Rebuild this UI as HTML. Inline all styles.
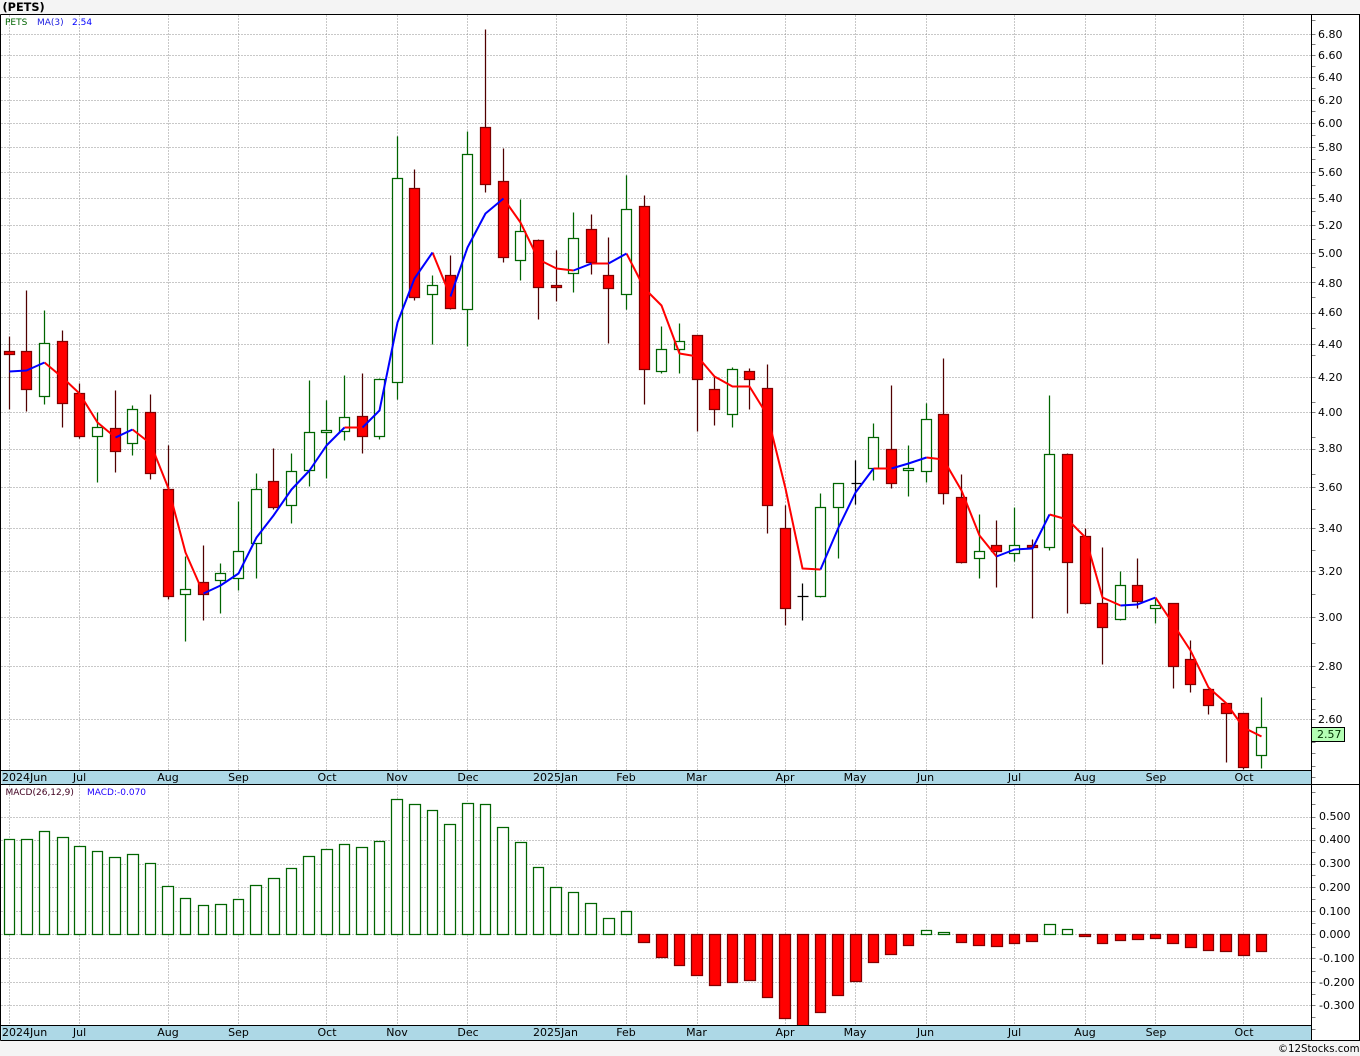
<!DOCTYPE html>
<html>
<head>
<meta charset="utf-8">
<title>PETS</title>
<style>
html,body{margin:0;padding:0;background:#f4f4f4;width:1360px;height:1056px;overflow:hidden}
svg{display:block;position:absolute;left:0;top:0}
text{font-family:"DejaVu Sans","Liberation Sans",sans-serif;font-size:11px;fill:#000}
.s{font-size:9px}
.c{text-anchor:middle}
</style>
</head>
<body>
<svg width="1360" height="1056" viewBox="0 0 1360 1056" xmlns="http://www.w3.org/2000/svg">
<rect x="0" y="0" width="1360" height="1056" fill="#f4f4f4"/>
<rect x="0" y="14" width="1360" height="1027" fill="#fff"/>
<text x="2.5" y="11" style="font-weight:bold;font-size:11.3px">(PETS)</text>

<g transform="translate(.5 .5)" shape-rendering="crispEdges">
<!-- grid -->
<path fill="none" stroke="#909090" stroke-dasharray="1 2" d="M1 34H1311M1 55H1311M1 77H1311M1 100H1311M1 123H1311M1 147H1311M1 172H1311M1 198H1311M1 225H1311M1 253H1311M1 282H1311M1 313H1311M1 344H1311M1 377H1311M1 412H1311M1 449H1311M1 487H1311M1 528H1311M1 571H1311M1 617H1311M1 666H1311M1 719H1311
M1 817H1311M1 840H1311M1 864H1311M1 887H1311M1 911H1311M1 934H1311M1 958H1311M1 982H1311M1 1005H1311
M9 15V770M79 15V770M168 15V770M238 15V770M326 15V770M397 15V770M467 15V770M556 15V770M626 15V770M697 15V770M785 15V770M855 15V770M926 15V770M1014 15V770M1085 15V770M1155 15V770M1243 15V770
M9 785V1025M79 785V1025M168 785V1025M238 785V1025M326 785V1025M397 785V1025M467 785V1025M556 785V1025M626 785V1025M697 785V1025M785 785V1025M855 785V1025M926 785V1025M1014 785V1025M1085 785V1025M1155 785V1025M1243 785V1025"/>
</g>

<g transform="translate(.5 .5)" stroke-width="1.25">
<!-- wicks: red candles -->
<path fill="none" stroke="#500000" d="M9 336V409M26 290V411M62 330V427M79 383V438M115 390V472M150 394V479M168 445V599M203 545V620M273 448V509M362 373V453M414 169V300M450 255V309M485 29V192M503 148V262M538 239V319M556 250V301M591 214V274M608 237V343M644 195V404M697 335V431M714 377V425M749 368V409M767 364V533M785 505V625M891 385V488M943 358V504M961 474V563M996 520V587M1032 539V618M1067 453V613M1085 528V604M1102 547V664M1137 558V608M1173 603V688M1190 640V692M1208 689V714M1226 703V762M1243 713V769"/>
<!-- wicks: green candles -->
<path fill="none" stroke="#006400" d="M44 310V404M97 412V482M132 405V455M185 556V641M220 563V613M238 501V590M256 473V578M291 453V523M309 380V486M326 400V478M344 375V440M379 378V439M397 136V399M432 275V344M467 131V346M520 199V280M573 212V292M626 175V309M661 326V373M679 323V373M732 367V427M820 493V597M838 483V558M873 423V480M908 445V496M926 403V482M979 514V578M1014 507V561M1049 395V550M1120 571V620M1155 598V623M1261 697V768"/>
<!-- doji -->
<path fill="none" stroke="#000" d="M802 583V620M797 596H808M855 460V504M851 483H862"/>

<!-- red bodies -->
<g fill="#f00" stroke="#800000">
<rect x="4" y="351" width="10" height="3"/>
<rect x="21" y="351" width="10" height="38"/>
<rect x="57" y="341" width="10" height="62"/>
<rect x="74" y="393" width="10" height="43"/>
<rect x="110" y="428" width="10" height="23"/>
<rect x="145" y="412" width="10" height="61"/>
<rect x="163" y="489" width="10" height="107"/>
<rect x="198" y="582" width="10" height="12"/>
<rect x="268" y="481" width="10" height="26"/>
<rect x="357" y="416" width="10" height="20"/>
<rect x="409" y="188" width="10" height="109"/>
<rect x="445" y="275" width="10" height="33"/>
<rect x="480" y="127" width="10" height="57"/>
<rect x="498" y="181" width="10" height="76"/>
<rect x="533" y="240" width="10" height="47"/>
<rect x="551" y="285" width="10" height="2"/>
<rect x="586" y="229" width="10" height="33"/>
<rect x="603" y="275" width="10" height="13"/>
<rect x="639" y="206" width="10" height="163"/>
<rect x="692" y="335" width="10" height="44"/>
<rect x="709" y="389" width="10" height="20"/>
<rect x="744" y="371" width="10" height="8"/>
<rect x="762" y="388" width="10" height="117"/>
<rect x="780" y="528" width="10" height="80"/>
<rect x="886" y="449" width="10" height="34"/>
<rect x="938" y="414" width="10" height="79"/>
<rect x="956" y="497" width="10" height="65"/>
<rect x="991" y="545" width="10" height="6"/>
<rect x="1027" y="545" width="10" height="2"/>
<rect x="1062" y="454" width="10" height="108"/>
<rect x="1080" y="536" width="10" height="67"/>
<rect x="1097" y="603" width="10" height="24"/>
<rect x="1132" y="585" width="10" height="16"/>
<rect x="1168" y="603" width="10" height="63"/>
<rect x="1185" y="659" width="10" height="25"/>
<rect x="1203" y="689" width="10" height="16"/>
<rect x="1221" y="703" width="10" height="10"/>
<rect x="1238" y="713" width="10" height="54"/>
</g>
<!-- green bodies -->
<g fill="#fff" stroke="#006400">
<rect x="39" y="343" width="10" height="53"/>
<rect x="92" y="427" width="10" height="9"/>
<rect x="127" y="409" width="10" height="34"/>
<rect x="180" y="589" width="10" height="5"/>
<rect x="215" y="573" width="10" height="7"/>
<rect x="233" y="551" width="10" height="27"/>
<rect x="251" y="489" width="10" height="54"/>
<rect x="286" y="471" width="10" height="34"/>
<rect x="304" y="432" width="10" height="38"/>
<rect x="321" y="430" width="10" height="2"/>
<rect x="339" y="417" width="10" height="14"/>
<rect x="374" y="379" width="10" height="57"/>
<rect x="392" y="178" width="10" height="204"/>
<rect x="427" y="285" width="10" height="9"/>
<rect x="462" y="154" width="10" height="155"/>
<rect x="515" y="231" width="10" height="29"/>
<rect x="568" y="238" width="10" height="35"/>
<rect x="621" y="209" width="10" height="85"/>
<rect x="656" y="349" width="10" height="22"/>
<rect x="674" y="341" width="10" height="8"/>
<rect x="727" y="369" width="10" height="45"/>
<rect x="815" y="507" width="10" height="89"/>
<rect x="833" y="483" width="10" height="24"/>
<rect x="868" y="437" width="10" height="31"/>
<rect x="903" y="468" width="10" height="2"/>
<rect x="921" y="419" width="10" height="52"/>
<rect x="974" y="551" width="10" height="7"/>
<rect x="1009" y="545" width="10" height="8"/>
<rect x="1044" y="454" width="10" height="93"/>
<rect x="1115" y="585" width="10" height="34"/>
<rect x="1150" y="605" width="10" height="3"/>
<rect x="1256" y="727" width="10" height="28"/>
</g>

<!-- MACD green bars -->
<g fill="#fff" stroke="#006400">
<rect x="4" y="839" width="10" height="95"/>
<rect x="21" y="839" width="11" height="95"/>
<rect x="39" y="831" width="10" height="103"/>
<rect x="57" y="837" width="11" height="97"/>
<rect x="74" y="846" width="11" height="88"/>
<rect x="92" y="851" width="10" height="83"/>
<rect x="109" y="857" width="11" height="77"/>
<rect x="127" y="854" width="11" height="80"/>
<rect x="145" y="863" width="10" height="71"/>
<rect x="162" y="886" width="11" height="48"/>
<rect x="180" y="898" width="10" height="36"/>
<rect x="198" y="905" width="10" height="29"/>
<rect x="215" y="904" width="11" height="30"/>
<rect x="233" y="899" width="10" height="35"/>
<rect x="250" y="885" width="11" height="49"/>
<rect x="268" y="878" width="11" height="56"/>
<rect x="286" y="868" width="10" height="66"/>
<rect x="303" y="856" width="11" height="78"/>
<rect x="321" y="849" width="11" height="85"/>
<rect x="339" y="844" width="10" height="90"/>
<rect x="356" y="847" width="11" height="87"/>
<rect x="374" y="841" width="10" height="93"/>
<rect x="391" y="799" width="11" height="135"/>
<rect x="409" y="804" width="11" height="130"/>
<rect x="427" y="810" width="10" height="124"/>
<rect x="444" y="824" width="11" height="110"/>
<rect x="462" y="803" width="11" height="131"/>
<rect x="480" y="804" width="10" height="130"/>
<rect x="497" y="827" width="11" height="107"/>
<rect x="515" y="842" width="11" height="92"/>
<rect x="533" y="867" width="10" height="67"/>
<rect x="550" y="887" width="11" height="47"/>
<rect x="568" y="892" width="10" height="42"/>
<rect x="585" y="903" width="11" height="31"/>
<rect x="603" y="918" width="11" height="16"/>
<rect x="621" y="911" width="10" height="23"/>
<rect x="921" y="930" width="10" height="4"/>
<rect x="938" y="932" width="11" height="2"/>
<rect x="1044" y="924" width="11" height="10"/>
<rect x="1062" y="929" width="10" height="5"/>
</g>
<!-- MACD red bars -->
<g fill="#f00" stroke="#800000">
<rect x="638" y="934" width="11" height="8"/>
<rect x="656" y="934" width="11" height="23"/>
<rect x="674" y="934" width="10" height="31"/>
<rect x="691" y="934" width="11" height="41"/>
<rect x="709" y="934" width="11" height="51"/>
<rect x="727" y="934" width="10" height="48"/>
<rect x="744" y="934" width="11" height="46"/>
<rect x="762" y="934" width="10" height="63"/>
<rect x="779" y="934" width="11" height="84"/>
<rect x="797" y="934" width="11" height="95"/>
<rect x="815" y="934" width="10" height="78"/>
<rect x="832" y="934" width="11" height="61"/>
<rect x="850" y="934" width="11" height="47"/>
<rect x="868" y="934" width="10" height="28"/>
<rect x="885" y="934" width="11" height="20"/>
<rect x="903" y="934" width="10" height="11"/>
<rect x="956" y="934" width="10" height="8"/>
<rect x="973" y="934" width="11" height="11"/>
<rect x="991" y="934" width="11" height="12"/>
<rect x="1009" y="934" width="10" height="9"/>
<rect x="1026" y="934" width="11" height="7"/>
<rect x="1079" y="934" width="11" height="2"/>
<rect x="1097" y="934" width="10" height="9"/>
<rect x="1115" y="934" width="10" height="6"/>
<rect x="1132" y="934" width="11" height="5"/>
<rect x="1150" y="934" width="10" height="4"/>
<rect x="1167" y="934" width="11" height="9"/>
<rect x="1185" y="934" width="11" height="13"/>
<rect x="1203" y="934" width="10" height="16"/>
<rect x="1220" y="934" width="11" height="17"/>
<rect x="1238" y="934" width="11" height="21"/>
<rect x="1256" y="934" width="10" height="17"/>
</g>
</g>

<!-- moving average -->
<g transform="translate(.5 .5)" fill="none" stroke-width="2" stroke-linejoin="round" stroke-linecap="butt">
<path stroke="#f00" d="M44 362L62 377L79 393L97 422L115 437M132 429L150 443L168 488L185 552L203 593M344 427L362 427M432 252L450 296M503 198L520 222L538 259L556 268L573 270M591 263L608 263M626 253L644 288L661 305L679 353L697 356L714 376L732 386L749 386L767 415L785 488L802 568L820 569M873 468L891 468M926 457L943 459L961 490L979 535L996 556M1049 514L1067 519L1085 537L1102 597L1120 605M1155 597L1173 624L1190 650L1208 687L1226 703L1243 727L1261 736"/>
<path stroke="#00f" d="M9 371L26 370L44 362M115 437L132 429M203 593L220 585L238 573L256 537L273 515L291 489L309 470L326 445L344 427M362 427L379 410L397 322L414 278L432 252M450 296L467 247L485 213L503 198M573 270L591 263M608 263L626 253M820 569L838 527L855 492L873 468M891 468L908 463L926 457M996 556L1014 549L1032 548L1049 514M1120 605L1137 604L1155 597"/>
</g>

<g transform="translate(.5 .5)" shape-rendering="crispEdges">
<!-- date bands -->
<rect x="1" y="770" width="1310" height="14" fill="#add8e6" stroke="none"/>
<rect x="1" y="1025" width="1310" height="15" fill="#add8e6" stroke="none"/>
<!-- ticks -->
<path fill="none" stroke="#808080" d="M1311 20H1315M1311 34H1315M1311 44H1315M1311 55H1315M1311 66H1315M1311 77H1315M1311 88H1315M1311 100H1315M1311 111H1315M1311 123H1315M1311 135H1315M1311 147H1315M1311 159H1315M1311 172H1315M1311 185H1315M1311 198H1315M1311 211H1315M1311 225H1315M1311 239H1315M1311 253H1315M1311 267H1315M1311 282H1315M1311 297H1315M1311 313H1315M1311 328H1315M1311 344H1315M1311 355H1315M1311 377H1315M1311 402H1315M1311 412H1315M1311 437H1315M1311 449H1315M1311 474H1315M1311 487H1315M1311 509H1315M1311 528H1315M1311 550H1315M1311 571H1315M1311 594H1315M1311 617H1315M1311 643H1315M1311 666H1315M1311 687H1315M1311 699H1315M1311 709H1315M1311 719H1315M1311 742H1315M1311 753H1315M1311 766H1315M1311 777H1315
M1311 792H1315M1311 804H1315M1311 817H1315M1311 828H1315M1311 840H1315M1311 852H1315M1311 864H1315M1311 875H1315M1311 887H1315M1311 899H1315M1311 911H1315M1311 923H1315M1311 934H1315M1311 947H1315M1311 958H1315M1311 971H1315M1311 982H1315M1311 994H1315M1311 1005H1315M1311 1017H1315M1311 1029H1315"/>
<!-- frame -->
<path fill="none" stroke="#000" d="M0 14H1360M0 14V1040M1359 14V1040M1311 14V1040M0 770H1311M0 784H1360M0 1025H1311M0 1040H1360"/>
<!-- last price box -->
<rect x="1311" y="727" width="33" height="14" fill="#b4ffb4" stroke="#000"/>
</g>

<!-- legends -->
<text class="s" x="5" y="25" style="fill:#006400">PETS</text>
<text class="s" x="37" y="25" style="fill:#2020e0">MA(3)</text>
<text class="s" x="72" y="25" style="fill:#0000ff">2.54</text>
<text class="s" x="5.5" y="795" style="fill:#400020">MACD(26,12,9)</text>
<text class="s" x="87" y="795" style="fill:#2000ff">MACD:-0.070</text>

<!-- price labels -->
<text x="1318" y="38">6.80</text>
<text x="1318" y="59">6.60</text>
<text x="1318" y="81">6.40</text>
<text x="1318" y="104">6.20</text>
<text x="1318" y="127">6.00</text>
<text x="1318" y="151">5.80</text>
<text x="1318" y="176">5.60</text>
<text x="1318" y="202">5.40</text>
<text x="1318" y="229">5.20</text>
<text x="1318" y="257">5.00</text>
<text x="1318" y="287">4.80</text>
<text x="1318" y="316">4.60</text>
<text x="1318" y="348">4.40</text>
<text x="1318" y="381">4.20</text>
<text x="1318" y="416">4.00</text>
<text x="1318" y="452">3.80</text>
<text x="1318" y="491">3.60</text>
<text x="1318" y="532">3.40</text>
<text x="1318" y="575">3.20</text>
<text x="1318" y="621">3.00</text>
<text x="1318" y="670">2.80</text>
<text x="1318" y="723">2.60</text>
<text x="1317" y="738" style="fill:#003000">2.57</text>

<!-- macd labels -->
<text x="1319" y="820">0.500</text>
<text x="1319" y="843">0.400</text>
<text x="1319" y="867">0.300</text>
<text x="1319" y="891">0.200</text>
<text x="1319" y="915">0.100</text>
<text x="1319" y="938">0.000</text>
<text x="1319" y="962">-0.100</text>
<text x="1319" y="986">-0.200</text>
<text x="1319" y="1009">-0.300</text>

<!-- date labels top -->
<text x="2" y="781">2024Jun</text>
<text class="c" x="79.5" y="781">Jul</text>
<text class="c" x="168" y="781">Aug</text>
<text class="c" x="238.5" y="781">Sep</text>
<text class="c" x="327" y="781">Oct</text>
<text class="c" x="397" y="781">Nov</text>
<text class="c" x="468" y="781">Dec</text>
<text class="c" x="555.5" y="781">2025Jan</text>
<text class="c" x="626" y="781">Feb</text>
<text class="c" x="696.5" y="781">Mar</text>
<text class="c" x="785" y="781">Apr</text>
<text class="c" x="855" y="781">May</text>
<text class="c" x="925.5" y="781">Jun</text>
<text class="c" x="1014.5" y="781">Jul</text>
<text class="c" x="1085" y="781">Aug</text>
<text class="c" x="1156" y="781">Sep</text>
<text class="c" x="1244" y="781">Oct</text>

<!-- date labels bottom -->
<text x="2" y="1036">2024Jun</text>
<text class="c" x="79.5" y="1036">Jul</text>
<text class="c" x="168" y="1036">Aug</text>
<text class="c" x="238.5" y="1036">Sep</text>
<text class="c" x="327" y="1036">Oct</text>
<text class="c" x="397" y="1036">Nov</text>
<text class="c" x="468" y="1036">Dec</text>
<text class="c" x="555.5" y="1036">2025Jan</text>
<text class="c" x="626" y="1036">Feb</text>
<text class="c" x="696.5" y="1036">Mar</text>
<text class="c" x="785" y="1036">Apr</text>
<text class="c" x="855" y="1036">May</text>
<text class="c" x="925.5" y="1036">Jun</text>
<text class="c" x="1014.5" y="1036">Jul</text>
<text class="c" x="1085" y="1036">Aug</text>
<text class="c" x="1156" y="1036">Sep</text>
<text class="c" x="1244" y="1036">Oct</text>

<text x="1359.5" y="1052" style="font-size:10.2px;text-anchor:end">©12Stocks.com</text>
</svg>
</body>
</html>
